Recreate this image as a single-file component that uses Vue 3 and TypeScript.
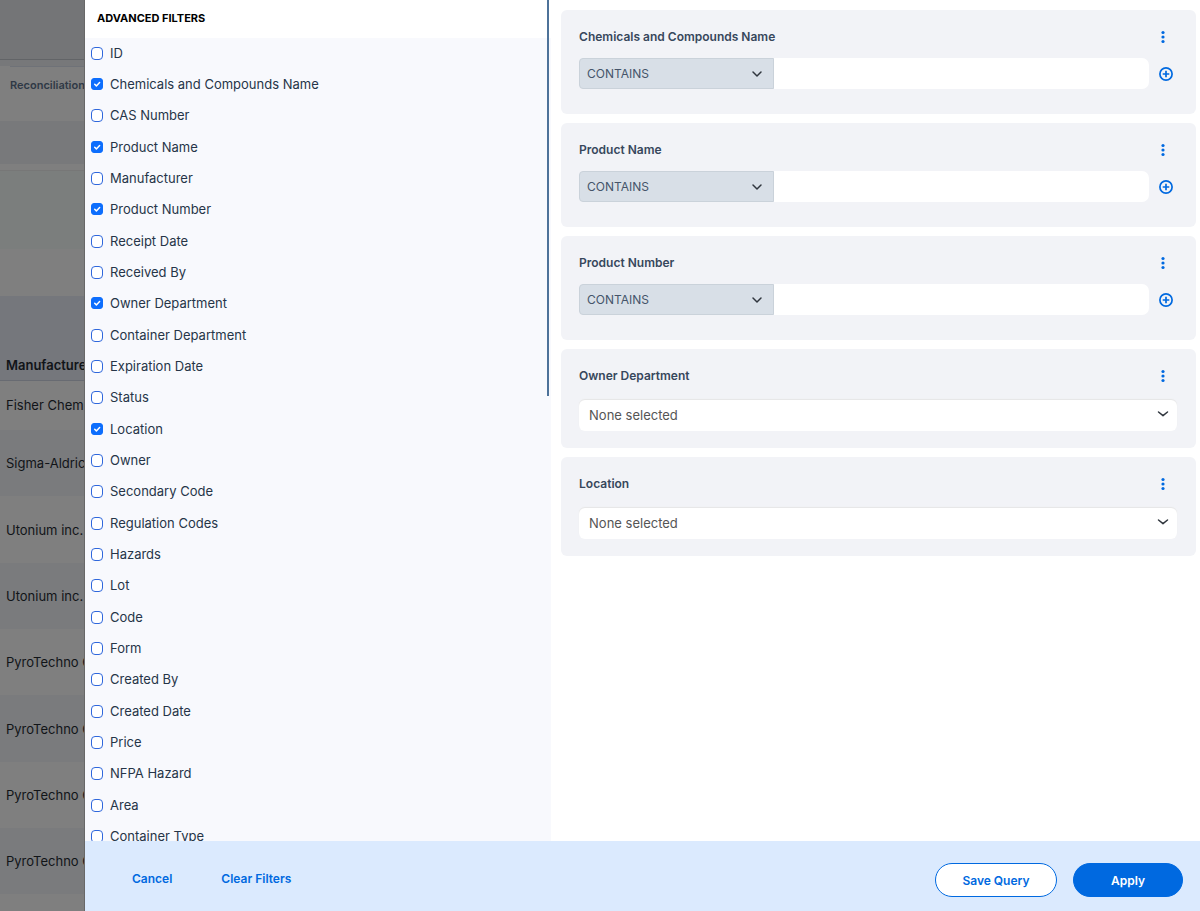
<script setup lang="ts">
import { reactive } from 'vue'

interface Field {
  name: string
  checked: boolean
}

interface FilterCard {
  title: string
  kind: 'text' | 'choice'
}

const selected = ['Chemicals and Compounds Name', 'Product Name', 'Product Number', 'Owner Department', 'Location']

const fields = reactive<Field[]>(
  [
    'ID', 'Chemicals and Compounds Name', 'CAS Number', 'Product Name', 'Manufacturer',
    'Product Number', 'Receipt Date', 'Received By', 'Owner Department', 'Container Department',
    'Expiration Date', 'Status', 'Location', 'Owner', 'Secondary Code', 'Regulation Codes',
    'Hazards', 'Lot', 'Code', 'Form', 'Created By', 'Created Date', 'Price', 'NFPA Hazard',
    'Area', 'Container Type',
  ].map((name) => ({ name, checked: selected.includes(name) })),
)

const cards: FilterCard[] = selected.map((title, i) => ({ title, kind: i < 3 ? 'text' : 'choice' }))

const manufacturers = [
  'Fisher Chemical', 'Sigma-Aldrich', 'Utonium inc.', 'Utonium inc.', 'PyroTechno Co',
  'PyroTechno Co', 'PyroTechno Co', 'PyroTechno Co', '',
]
</script>

<template>
  <div class="app">
    <div class="page">
      <div class="topbar"></div>
      <div class="strip"></div>
      <div class="tabs"><a href="#" class="tab">Reconciliation</a></div>
      <div class="toolbar"></div>
      <div class="notice"></div>
      <div class="spacer"></div>
      <table class="grid">
        <thead>
          <tr><th>Manufacturer</th></tr>
        </thead>
        <tbody>
          <tr v-for="(m, i) in manufacturers" :key="i"><td>{{ m }}</td></tr>
        </tbody>
      </table>
    </div>

    <section class="drawer" aria-label="Advanced filters">
      <div class="body">
        <aside class="fields">
          <h2 class="heading">ADVANCED FILTERS</h2>
          <ul class="list">
            <li v-for="f in fields" :key="f.name">
              <label class="option">
                <span class="box">
                  <input v-model="f.checked" type="checkbox" />
                  <svg v-if="f.checked" viewBox="0 0 12 12" aria-hidden="true">
                    <path d="M3.7 6.2 5.4 7.9 8.6 4.6" />
                  </svg>
                </span>
                <span>{{ f.name }}</span>
              </label>
            </li>
          </ul>
          <div class="thumb"></div>
        </aside>

        <main class="cards">
          <section v-for="(c, i) in cards" :key="c.title" class="card" :class="c.kind">
            <header class="card-head">
              <label :for="'filter-' + i">{{ c.title }}</label>
              <button type="button" class="icon more" :aria-label="'Options for ' + c.title">
                <svg width="6" height="14" viewBox="0 0 6 14">
                  <circle cx="3" cy="2.5" r="1.6" />
                  <circle cx="3" cy="7" r="1.6" />
                  <circle cx="3" cy="11.5" r="1.6" />
                </svg>
              </button>
            </header>
            <div v-if="c.kind === 'text'" class="row">
              <div class="picker operator">
                <select :aria-label="c.title + ' operator'">
                  <option>CONTAINS</option>
                </select>
                <svg class="chevron" width="12" height="8" viewBox="0 0 12 8"><path d="M2 2 6 6 10 2" /></svg>
              </div>
              <input :id="'filter-' + i" type="text" class="value" />
              <button type="button" class="icon add" :aria-label="'Add ' + c.title">
                <svg width="14" height="14" viewBox="0 0 14 14">
                  <circle cx="7" cy="7" r="6.1" />
                  <path d="M7 3.700v6.600M3.700 7h6.600" />
                </svg>
              </button>
            </div>
            <div v-else class="picker choice-box">
              <select :id="'filter-' + i">
                <option>None selected</option>
              </select>
              <svg class="chevron" width="12" height="8" viewBox="0 0 12 8"><path d="M1.5 2 6 5.7 10.5 2" /></svg>
            </div>
          </section>
        </main>
      </div>

      <footer class="footer">
        <button type="button" class="link">Cancel</button>
        <button type="button" class="link">Clear Filters</button>
        <button type="button" class="pill outline">Save Query</button>
        <button type="button" class="pill solid">Apply</button>
      </footer>
    </section>
  </div>
</template>

<style>
body {
  margin: 0;
  overflow: hidden;
}
</style>

<style scoped>
* {
  box-sizing: border-box;
}

.app {
  display: grid;
  grid-template-columns: 85px minmax(0, 1fr);
  height: 100vh;
  overflow: hidden;
  font-family: Inter, "Liberation Sans", sans-serif;
  font-size: 13px;
  color: #263548;
}

button,
input,
select {
  font: inherit;
}

/* Page behind the drawer, dimmed */
.page {
  min-width: 0;
  overflow: hidden;
  background: #7f7f7f;
  color: #111418;
  white-space: nowrap;
}

.topbar {
  height: 60px;
  background: #747577;
  border-bottom: 1px solid #626467;
}

.strip {
  height: 6px;
  background: #77787a;
}

.tabs {
  height: 55px;
  padding-left: 10px;
}

.tab {
  display: block;
  padding-top: 9px;
  border-top: 1px solid #6f7278;
  font-size: 11px;
  line-height: 18px;
  font-weight: 600;
  color: #2f3946;
  text-decoration: none;
}

.toolbar {
  height: 43px;
  background: #78797b;
}

.notice {
  height: 79px;
  margin-top: 6px;
  background: #7b7e7d;
  border-top: 1px solid #777;
}

.spacer {
  height: 47px;
}

.grid {
  width: 100%;
  border-collapse: collapse;
}

.grid th {
  height: 84px;
  padding: 0 0 6px 6px;
  vertical-align: bottom;
  text-align: left;
  font-weight: 600;
  line-height: 18px;
  background: #75777c;
  border-bottom: 1px solid #686b72;
}

.grid td {
  height: 66px;
  padding: 0 0 0 6px;
}

.grid tbody tr:first-child td {
  height: 50px;
  padding-bottom: 1px;
}

.grid tbody tr:nth-child(3n) td {
  height: 67px;
}

.grid tbody tr:nth-child(even) {
  background: #7a7b7d;
}

/* Drawer */
.drawer {
  position: relative;
  display: flex;
  flex-direction: column;
  min-width: 0;
  min-height: 0;
  background: #fff;
  box-shadow: -1px 0 0 #686868;
}

.body {
  display: flex;
  flex: 1;
  min-height: 0;
}

.fields {
  position: relative;
  flex: 0 0 41.8%;
  overflow: hidden;
  background: #f8f9fd;
}

.heading {
  margin: 0;
  height: 38px;
  padding-left: 12px;
  background: #fff;
  color: #000;
  font-size: 11px;
  line-height: 37px;
  font-weight: 700;
}

.list {
  margin: 0;
  padding: 0 6px;
  list-style: none;
}

.list li:nth-child(3n) {
  margin-bottom: 1px;
}

.option {
  display: flex;
  align-items: center;
  gap: 7px;
  height: 31px;
  line-height: 17px;
}

.box {
  display: grid;
  width: 12px;
  height: 13px;
}

.box input {
  grid-area: 1 / 1;
  appearance: none;
  width: 12px;
  height: 13px;
  margin: 0;
  border: 1px solid #2f67dc;
  border-radius: 4px;
  background: #fff;
}

.box input:checked {
  height: 12px;
  border-color: #0d6efd;
  border-radius: 3px;
  background: #0d6efd;
}

.box svg {
  grid-area: 1 / 1;
  width: 12px;
  height: 12px;
  z-index: 1;
  pointer-events: none;
  fill: none;
  stroke: #fff;
  stroke-width: 1.5;
  stroke-linecap: round;
  stroke-linejoin: round;
}

.thumb {
  position: absolute;
  top: 0;
  right: 2px;
  width: 2px;
  height: 396px;
  background: #4d7299;
}

.cards {
  display: flex;
  flex: 1;
  flex-direction: column;
  gap: 9px;
  min-width: 0;
  padding: 10px 4px 0 10px;
}

.card {
  padding: 18px 19px 24px 18px;
  border-radius: 6px;
  background: #f2f3f7;
}

.card.choice {
  padding-bottom: 17px;
}

.card-head {
  display: flex;
  justify-content: space-between;
  height: 30px;
  padding-right: 11px;
  font-size: 12px;
  line-height: 18px;
  font-weight: 600;
  color: #37475c;
}

.choice .card-head {
  height: 33px;
}

.icon {
  display: flex;
  align-items: center;
  padding: 0;
  border: 0;
  background: none;
  color: #0069e0;
}

.more {
  height: 18px;
}

.more svg {
  fill: currentColor;
}

.add svg {
  fill: none;
  stroke: currentColor;
  stroke-width: 1.7;
}

.row {
  display: flex;
  height: 31px;
  margin-bottom: 1px;
  padding-right: 4px;
}

.picker {
  position: relative;
}

.picker select {
  appearance: none;
  width: 100%;
  height: 100%;
  margin: 0;
}

.chevron {
  position: absolute;
  top: 50%;
  right: 11px;
  transform: translateY(-50%);
  pointer-events: none;
  fill: none;
  stroke: #30363e;
  stroke-width: 1.5;
  stroke-linecap: round;
  stroke-linejoin: round;
}

.operator {
  width: 195px;
}

.operator select {
  padding: 0 7px;
  border: 1px solid #cad2da;
  border-radius: 4px 0 0 4px;
  background: #d8dfe7;
  font-size: 12px;
  color: #45546a;
}

.value {
  flex: 1;
  min-width: 0;
  padding: 0 10px;
  border: 0;
  border-radius: 0 7px 7px 0;
  background: #fff;
}

.add {
  margin-left: 10px;
}

.choice-box {
  height: 31px;
}

.choice-box select {
  padding: 0 10px 2px;
  border: 0;
  border-radius: 6px;
  background: #fff;
  box-shadow: 0 -1px 1px #e6e6e6;
  color: #555;
}

.choice-box .chevron {
  top: 14px;
  right: 8px;
}

.footer {
  display: flex;
  align-items: center;
  height: 70px;
  padding: 8px 17px 0 47px;
  background: #dbeafe;
}

.link {
  margin-right: 49px;
  padding: 0 0 4px;
  border: 0;
  background: none;
  font-size: 12px;
  font-weight: 600;
  color: #0069e0;
}

.pill {
  height: 34px;
  padding: 0;
  border: 1px solid #0069e0;
  border-radius: 17px;
  font-size: 12px;
  font-weight: 600;
}

.outline {
  width: 122px;
  margin-left: auto;
  background: #fff;
  color: #0069e0;
}

.solid {
  width: 110px;
  margin-left: 16px;
  background: #0069e0;
  color: #fff;
}
</style>
